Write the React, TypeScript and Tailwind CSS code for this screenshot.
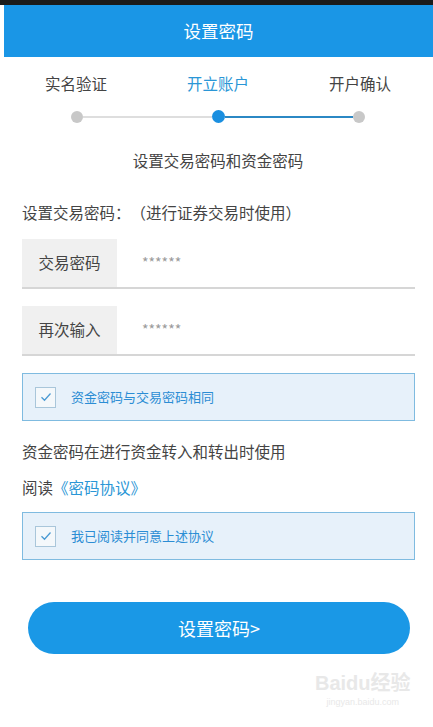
import { useState } from 'react';

const font = { fontFamily: '"Noto Sans CJK SC", "Noto Sans", sans-serif' };

const steps = ['实名验证', '开立账户', '开户确认'];

const CheckRow = ({ label, checked, onToggle }: { label: string; checked: boolean; onToggle: () => void }) => (
    <button
        onClick={onToggle}
        className="mt-[17px] flex h-[48px] w-full items-center border-[1.5px] border-[#7fbbe0] bg-[#e7f1fa] pl-[12px] text-left"
    >
        <span className="flex h-[21px] w-[21px] items-center justify-center border border-[#a9c6da] bg-[#f4f8fb]">
            {checked && (
                <svg width="12" height="10" viewBox="0 0 12 10" fill="none">
                    <path d="M1.5 5.2 L4.5 8.2 L10.5 1.5" stroke="#4a9ad3" strokeWidth="1.3" />
                </svg>
            )}
        </span>
        <span className="ml-[15px] text-[13px] text-[#2b8dd4]">{label}</span>
    </button>
);

const PwdRow = ({ label }: { label: string }) => (
    <div className="flex h-[50px] border-b-2 border-[#d6d6d6]">
        <div className="flex w-[95px] items-center justify-center bg-[#f0f0f0] text-[15.5px] text-[#444]">{label}</div>
        <div className="ml-[25px] flex items-center pb-[2px] text-[14px] text-[#9a9a9a]">******</div>
    </div>
);

const App = () => {
    const [same, setSame] = useState(true);
    const [agree, setAgree] = useState(true);

    return (
        <div className="relative h-[727px] w-[433px] overflow-hidden bg-white [text-spacing-trim:space-all]" style={font}>
            <div className="h-[5px] bg-[#1b1b1b]"></div>
            <div className="ml-[4px] flex h-[52px] items-center justify-center bg-[#1a96e6] text-[17.5px] text-white">
                设置密码
            </div>

            {/* steps */}
            <div className="ml-[5px] w-[426px]">
                <div className="mt-[14px] grid grid-cols-3 text-center text-[15.5px] leading-[24px] text-[#444]">
                    {steps.map((s, i) => (
                        <div key={s} className={i === 1 ? 'text-[#2a96d6]' : ''}>
                            {s}
                        </div>
                    ))}
                </div>
                <div className="mt-[15px] flex h-[13px] items-center px-[66px]">
                    <div className="h-[12px] w-[12px] rounded-full bg-[#c8c8c8]"></div>
                    <div className="h-[2px] flex-1 bg-[#dedede]"></div>
                    <div className="h-[13px] w-[13px] rounded-full bg-[#1a8fe0]"></div>
                    <div className="h-[2px] flex-1 bg-[#2b88c4]"></div>
                    <div className="h-[12px] w-[12px] rounded-full bg-[#c8c8c8]"></div>
                </div>
                <div className="mt-[26px] text-center text-[15.5px] leading-[22px] text-[#444]">设置交易密码和资金密码</div>
            </div>

            <div className="pl-[22px] pr-[18px]">
                <div className="mt-[30px] text-[15.5px] leading-[22px] text-[#444]">设置交易密码：（进行证券交易时使用）</div>
                <div className="mt-[16px]">
                    <PwdRow label="交易密码" />
                </div>
                <div className="mt-[17px]">
                    <PwdRow label="再次输入" />
                </div>

                <CheckRow label="资金密码与交易密码相同" checked={same} onToggle={() => setSame(!same)} />

                <div className="mt-[19px] text-[15.5px] leading-[22px] text-[#444]">资金密码在进行资金转入和转出时使用</div>
                <div className="mt-[14px] text-[15.5px] leading-[22px] text-[#444]">
                    阅读<span className="text-[#2a96d6]">《密码协议》</span>
                </div>

                <div className="-mt-[3px]">
                    <CheckRow label="我已阅读并同意上述协议" checked={agree} onToggle={() => setAgree(!agree)} />
                </div>

                <button className="ml-[6px] mr-[5px] mt-[42px] flex h-[52px] w-[382px] items-center justify-center rounded-full bg-[#1a98e6] text-[18px] text-white">
                    设置密码&gt;
                </button>
            </div>

            {/* watermark */}
            <div className="absolute left-[315px] top-[670px] flex flex-col items-center text-[#e8e8e8]">
                <div className="text-[20px] font-bold leading-[26px]" style={{ fontFamily: '"Liberation Sans", "Noto Sans CJK SC", sans-serif' }}>
                    Baidu经验
                </div>
                <div className="text-[9px] leading-[12px]" style={{ fontFamily: '"Liberation Sans", sans-serif' }}>
                    jingyan.baidu.com
                </div>
            </div>
        </div>
    );
};

export default App;
